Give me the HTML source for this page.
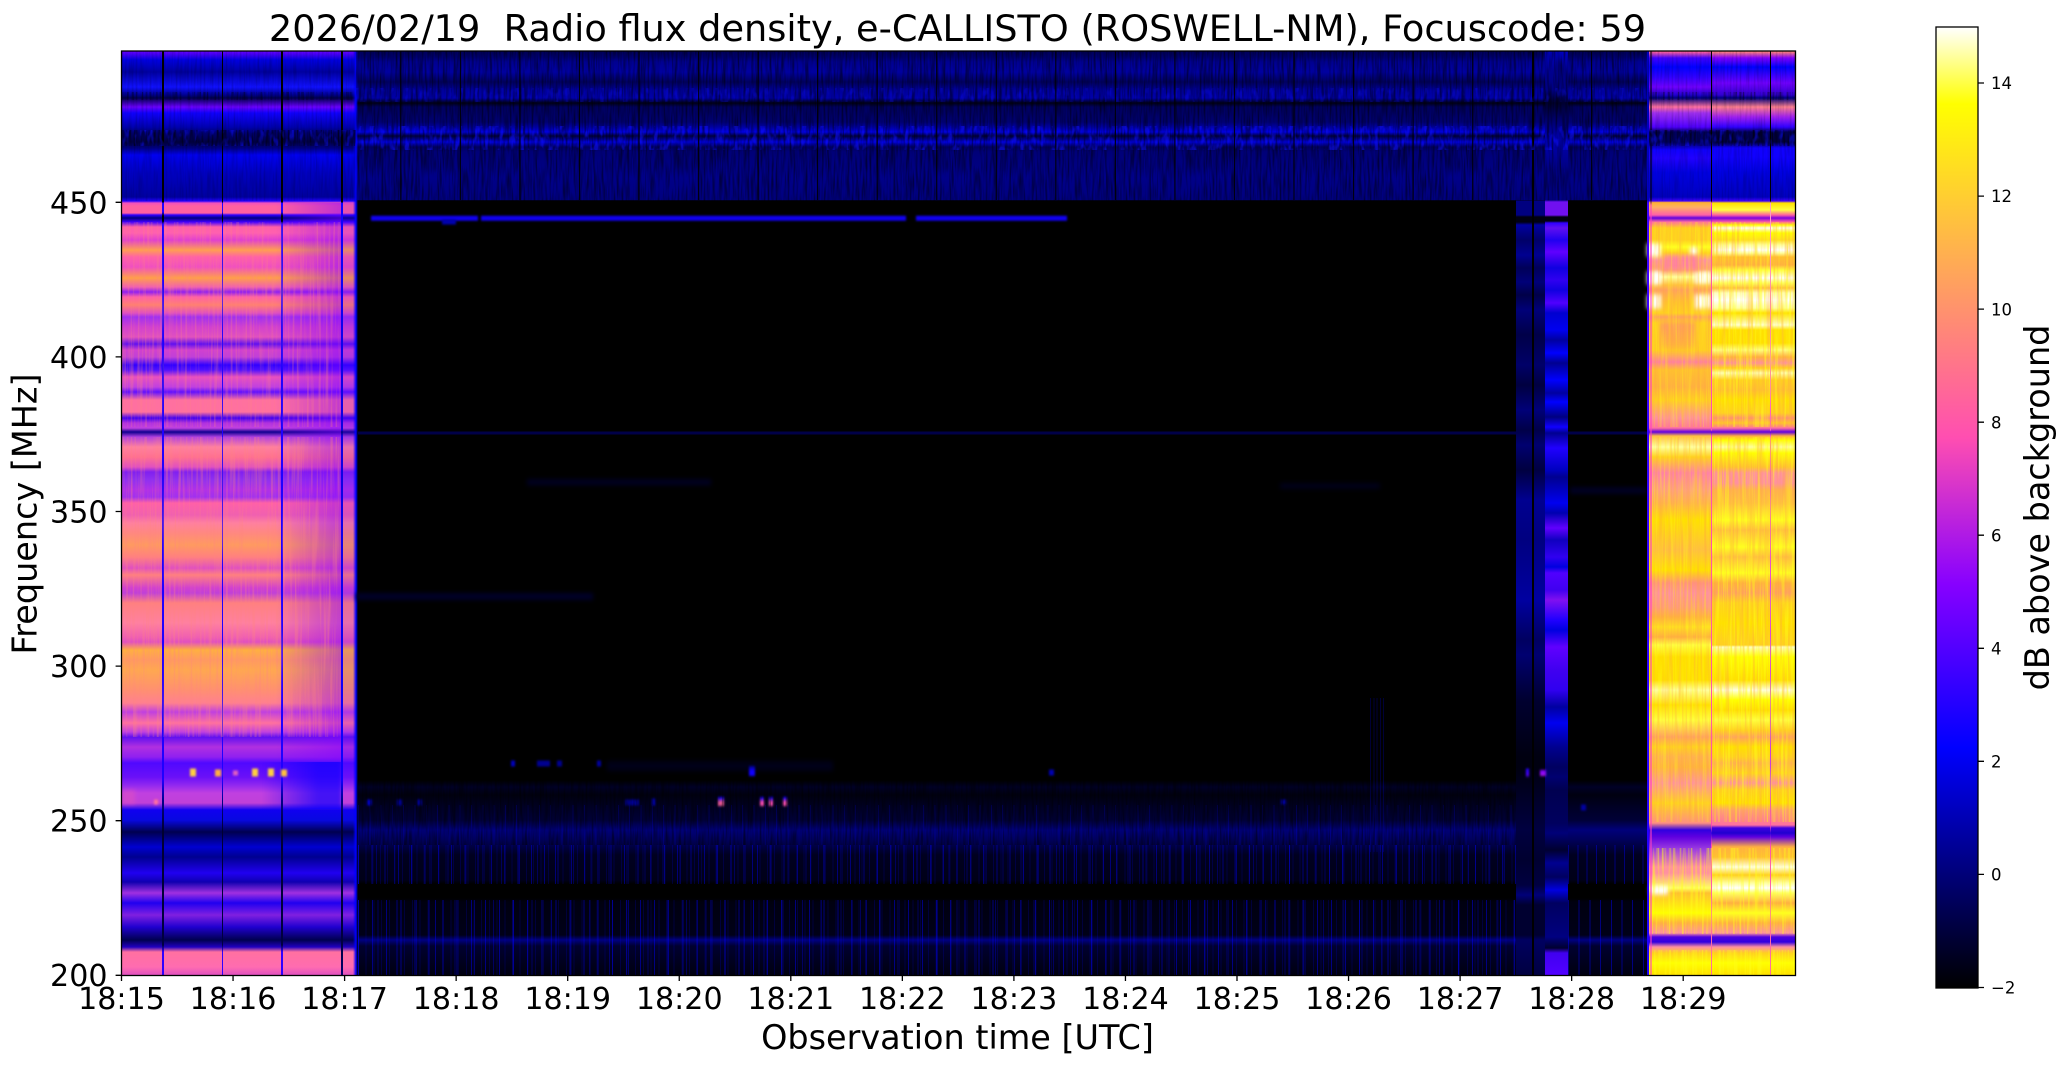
<!DOCTYPE html>
<html lang="en">
<head>
<meta charset="utf-8">
<title>2026/02/19 Radio flux density, e-CALLISTO (ROSWELL-NM)</title>
<style>
html,body{margin:0;padding:0;background:#fff}
body{width:2066px;height:1067px;overflow:hidden;position:relative;font-family:"DejaVu Sans","Liberation Sans",sans-serif}
#clip{position:absolute;left:0;top:0;width:2066px;height:1067px;clip-path:inset(51px 270.5px 92px 121.5px);background:#000}
#clip div{position:absolute;top:0;height:1067px}
#clip .b{filter:blur(1px)}
#clip .c{filter:blur(2px)}
#over{position:absolute;left:0;top:0}
#noise{position:absolute;left:0;top:0;clip-path:inset(51px 270.5px 92px 121.5px)}
#cb{position:absolute;left:1936px;top:27px;width:42px;height:961px;background:linear-gradient(to top,#000 0%,#00f 25%,#8700ff 42%,#ff4eb1 57.25%,#ff0 92%,#fff 100%)}
</style>
</head>
<body>
<div id="clip">
  <!-- middle top band -->
  <div style="left:356px;width:1291px;background:linear-gradient(180deg,#000058 51px,#000070 57px,#000090 62px,#0000a0 72px,#000060 82px,#00009a 90px,#0000a8 98px,#000018 103px,#000060 107px,#000070 122px,#0000a0 127px,#0000e0 132px,#000040 136px,#0000e0 142px,#000060 147px,#000078 152px,#000088 178px,#000080 198px,#000080 200px,transparent 200.5px)"></div>
  <!-- left panel -->
  <div style="left:122px;width:234px;background:linear-gradient(180deg,#6000ff 52px,#0000e0 60px,#0000a0 72px,#1010ff 87px,#000090 95px,#000050 98px,#6a00ff 107px,#1000ff 113px,#0000b0 127px,#000070 133px,#000048 142px,#000080 148px,#0000f0 155px,#0000c0 173px,#0000a0 197px,#2000ff 201px,#f050c0 203px,#ff60a0 206px,#ff60a0 213px,#3000ff 215px,#000080 218px,#4000ff 222px,#ff60a8 227px,#ff60b0 233px,#e040d0 240px,#ffa050 250px,#ff60a8 257px,#f050c0 267px,#ffa048 278px,#f060b0 287px,#9020f0 292px,#ff60a8 297px,#ff8070 305px,#e050c0 313px,#a030f0 317px,#d040d0 327px,#e050c0 337px,#6010f0 344px,#d040d0 350px,#c040d8 357px,#3000ff 365px,#5010ff 370px,#e850c0 377px,#c040e0 387px,#6010ff 392px,#ff70a0 400px,#ff70a0 412px,#4000f0 418px,#b030e0 423px,#c040e0 428px,#100090 432px,#b040e0 437px,#ff80a0 447px,#ff7090 457px,#e050c0 467px,#8020f0 472px,#9030f0 480px,#b030e8 490px,#a030f0 497px,#ff60a8 503px,#f060b0 515px,#ff80a0 523px,#ff8880 533px,#ff9a60 545px,#ff8080 557px,#e050c0 568px,#ff8080 575px,#d040d0 588px,#c040d8 593px,#ff8080 603px,#ff80a0 623px,#f060b0 637px,#e050c0 642px,#ffb040 650px,#ff9a60 660px,#ffa850 670px,#ff9070 690px,#ff8090 703px,#c040e0 712px,#ff70a0 723px,#c040e0 732px,#6010f0 737px,#b030e0 747px,#9020f0 757px,#5008ff 763px,#6a10f8 777px,#9028f0 785px,#c040e0 793px,#c040d8 803px,#1000f0 810px,#0808e0 820px,#000050 832px,#0000d0 847px,#000090 857px,#2000f0 873px,#1000b0 882px,#a030e0 893px,#2000f0 903px,#8020e0 915px,#2000d0 927px,#000050 940px,#2000c0 947px,#ff70a0 952px,#ff6cb0 967px,#e050c0 975px)"></div>
  <!-- left panel fade -->
  <div style="left:275px;width:67px;background:linear-gradient(90deg,rgba(130,0,255,0),rgba(130,0,255,.5));clip-path:inset(203px 0 307px 0)"></div>
  <div style="left:342px;width:14px;background:rgba(80,0,255,.14);clip-path:inset(203px 0 307px 0)"></div>
  <div class="c" style="left:262px;width:80px;background:linear-gradient(90deg,rgba(16,0,255,0),#1000ff 70%);opacity:.7;clip-path:inset(762px 0 258px 0)"></div>
  <div style="left:353px;width:5px;background:linear-gradient(90deg,rgba(0,0,255,0),#0000ff 60%,rgba(0,0,160,0));clip-path:inset(51px 0 92px 0)"></div>
  <!-- left panel vertical lines -->
  <div style="left:162px;width:1.6px;background:linear-gradient(180deg,#000 51px,#000 202px,#2000ff 203px,#2000ff 212px,#000 216px,#000 221px,#2000ff 224px,#2000ff 780px,#000090 800px,#000030 830px,#000040 945px,#3000ff 952px,#3000ff 975px)"></div>
  <div style="left:221.5px;width:1.6px;background:linear-gradient(180deg,#000 51px,#000 202px,#2000ff 203px,#2000ff 212px,#000 216px,#000 221px,#2000ff 224px,#2000ff 780px,#000090 800px,#000030 830px,#000040 945px,#3000ff 952px,#3000ff 975px)"></div>
  <div style="left:281px;width:1.6px;background:linear-gradient(180deg,#000 51px,#000 202px,#2000ff 203px,#2000ff 212px,#000 216px,#000 221px,#2000ff 224px,#2000ff 780px,#000090 800px,#000030 830px,#000040 945px,#3000ff 952px,#3000ff 975px)"></div>
  <div style="left:341px;width:1.6px;background:linear-gradient(180deg,#000 51px,#000 202px,#1000ff 203px,#1000e0 430px,#000080 432px,#1000e0 436px,#1000ff 780px,#000090 800px,#000030 830px,#000040 945px,#000070 975px)"></div>
  <!-- left panel dots -->
  <div class="b" style="left:190px;width:6px;background:linear-gradient(180deg,transparent 768px,#ffd040 769px,#ffd040 776px,transparent 777px)"></div>
  <div class="b" style="left:215px;width:6px;background:linear-gradient(180deg,transparent 769px,#ffb040 770px,#ffb040 776px,transparent 777px)"></div>
  <div class="b" style="left:233px;width:5px;background:linear-gradient(180deg,transparent 770px,#e060c0 771px,#e060c0 775px,transparent 776px)"></div>
  <div class="b" style="left:252px;width:6px;background:linear-gradient(180deg,transparent 768px,#ffd040 769px,#ffd040 776px,transparent 777px)"></div>
  <div class="b" style="left:268px;width:6px;background:linear-gradient(180deg,transparent 768px,#ffd040 769px,#ffd040 776px,transparent 777px)"></div>
  <div class="b" style="left:281px;width:6px;background:linear-gradient(180deg,transparent 769px,#ffc040 770px,#ffc040 776px,transparent 777px)"></div>
  <div class="b" style="left:154px;width:4px;background:linear-gradient(180deg,transparent 799px,#ff70a0 800px,#ff70a0 804px,transparent 805px)"></div>
  <div class="c" style="left:122px;width:13px;opacity:.55;background:linear-gradient(180deg,transparent 789px,#e050c0 791px,#e050c0 803px,transparent 805px)"></div>

  <!-- blue tracer at 445 MHz -->
  <div class="b" style="left:371px;width:107px;background:linear-gradient(180deg,transparent 215.5px,#1000f0 216px,#1000f0 220.5px,transparent 221px)"></div>
  <div class="b" style="left:481px;width:425px;background:linear-gradient(180deg,transparent 215.5px,#1000f0 216px,#1000f0 220.5px,transparent 221px)"></div>
  <div class="b" style="left:916px;width:151px;background:linear-gradient(180deg,transparent 215.5px,#1000f0 216px,#1000f0 220.5px,transparent 221px)"></div>
  <div class="b" style="left:442px;width:14px;background:linear-gradient(180deg,transparent 219px,#0000b0 220px,#0000b0 224px,transparent 225px)"></div>

  <!-- faint structures in the black -->
  <div style="left:358px;width:1289px;background:linear-gradient(180deg,transparent 431px,#000048 432px,#000048 434px,transparent 435px)"></div>
  <div class="c" style="left:527px;width:184px;background:linear-gradient(180deg,transparent 478px,#000020 480px,#000020 484px,transparent 487px)"></div>
  <div class="c" style="left:1280px;width:100px;background:linear-gradient(180deg,transparent 482px,#000018 484px,#000018 488px,transparent 490px)"></div>
  <div class="c" style="left:1570px;width:77px;background:linear-gradient(180deg,transparent 486px,#000022 488px,#000022 493px,transparent 495px)"></div>
  <div class="c" style="left:356px;width:237px;background:linear-gradient(180deg,transparent 592px,#000028 594px,#000028 599px,transparent 601px)"></div>
  <div class="c" style="left:607px;width:226px;background:linear-gradient(180deg,transparent 760px,#000018 762px,#000018 770px,transparent 772px)"></div>
  <!-- lower horizontal bands -->
  <div style="left:358px;width:1289px;background:linear-gradient(180deg,transparent 780px,#000026 787px,#000010 795px,#000026 808px,#000036 820px,#00007a 830px,#00005a 840px,#000020 855px,#000018 880px,#000 884px,#000 898px,#000010 902px,#000018 935px,#000080 940px,#000030 946px,#000010 975px)"></div>
  <!-- vertical thin streaks -->
  <div style="left:358px;width:1158px;clip-path:inset(845px 0 183px 0);background:repeating-linear-gradient(90deg,rgba(0,0,255,.4) 0 1px,transparent 1px 13.3px),repeating-linear-gradient(90deg,rgba(0,0,255,.28) 0 1px,transparent 1px 17.9px),repeating-linear-gradient(90deg,rgba(0,0,220,.2) 0 1px,transparent 1px 7.3px)"></div>
  <div style="left:358px;width:1158px;clip-path:inset(900px 0 92px 0);background:repeating-linear-gradient(90deg,rgba(0,0,255,.45) 0 1px,transparent 1px 14.1px),repeating-linear-gradient(90deg,rgba(0,0,255,.3) 0 1px,transparent 1px 19.3px),repeating-linear-gradient(90deg,rgba(0,0,220,.2) 0 1px,transparent 1px 7.7px)"></div>
  <div style="left:1568px;width:79px;clip-path:inset(845px 0 183px 0);background:repeating-linear-gradient(90deg,rgba(0,0,255,.4) 0 1px,transparent 1px 9.3px)"></div>
  <div style="left:1568px;width:79px;clip-path:inset(900px 0 92px 0);background:repeating-linear-gradient(90deg,rgba(0,0,255,.45) 0 1px,transparent 1px 10.7px)"></div>
  <div style="left:358px;width:1158px;clip-path:inset(805px 0 222px 0);opacity:.45;background:repeating-linear-gradient(90deg,rgba(0,0,255,.4) 0 1px,transparent 1px 11.3px)"></div>
  <div style="left:1370px;width:16px;clip-path:inset(698px 0 215px 0);opacity:.55;background:repeating-linear-gradient(90deg,rgba(0,0,200,.5) 0 1px,transparent 1px 3.3px)"></div>

  <!-- column A -->
  <div style="left:1516px;width:29px;background:linear-gradient(180deg,transparent 200px,#000080 201px,#000080 215px,#000010 217px,#000010 222px,#0000a0 225px,#000068 240px,#000090 255px,#000058 268px,#000078 282px,#000048 295px,#000078 310px,#000048 335px,#000068 365px,#000040 385px,#000078 410px,#000048 430px,#000070 445px,#000040 470px,#000090 500px,#000080 540px,#0000a0 600px,#000060 640px,#000070 655px,#000030 700px,#000020 730px,#000010 757px,#000010 768px,#000040 830px,#000030 860px,#000040 885px,#000078 895px,#000030 905px,#000030 935px,#000060 940px,#000040 975px)"></div>
  <div style="left:1532px;width:1.5px;background:#000"></div>
  <!-- column B -->
  <div style="left:1545px;width:23px;background:linear-gradient(180deg,#0000c0 52px,#000090 70px,#000080 90px,#000030 103px,#000090 130px,#0000b0 140px,#000080 170px,#000088 200px,#7010f0 202px,#7010f0 215px,#000010 217px,#000010 221px,#3000ff 223px,#6010f0 228px,#2000f0 240px,#6000ff 252px,#1000e0 268px,#3000f0 280px,#1000e0 290px,#5000ff 303px,#0000d0 313px,#0000f0 330px,#0000a0 340px,#0000ff 353px,#000090 363px,#0000ff 380px,#0000a0 393px,#0000ff 402px,#000080 417px,#1000ff 427px,#000090 433px,#2000ff 448px,#0000c0 470px,#000090 477px,#0000f0 503px,#0000b0 513px,#6000ff 528px,#1000c0 540px,#3000f0 557px,#0000e0 567px,#5000ff 573px,#4000f0 590px,#8010f0 600px,#2000ff 620px,#0000e0 630px,#6000ff 647px,#4000f0 670px,#3000f0 690px,#0000a0 707px,#0000f0 723px,#000090 747px,#000060 767px,#000070 777px,#000050 790px,#00005e 823px,#000078 833px,#000030 850px,#000090 863px,#000060 877px,#0000e0 890px,#000060 903px,#000080 937px,#000030 948px,#4000f0 953px,#5000ff 973px)"></div>
  <!-- dots in the black -->
  <div class="b" style="left:718px;width:6px;background:linear-gradient(180deg,transparent 796px,#1000ff 798px,#ff60a0 802px,#ff60a0 805px,transparent 807px)"></div>
  <div class="b" style="left:760px;width:4px;background:linear-gradient(180deg,transparent 796px,#1000ff 798px,#ff50b0 802px,#ff50b0 805px,transparent 807px)"></div>
  <div class="b" style="left:769px;width:4px;background:linear-gradient(180deg,transparent 796px,#1000ff 798px,#ff50b0 802px,#ff50b0 805px,transparent 807px)"></div>
  <div class="b" style="left:783px;width:4px;background:linear-gradient(180deg,transparent 796px,#1000ff 798px,#ff50b0 802px,#ff50b0 805px,transparent 807px)"></div>
  <div class="b" style="left:749px;width:6px;background:linear-gradient(180deg,transparent 765px,#0000a0 767px,#1000ff 771px,#1000ff 775px,transparent 777px)"></div>
  <div class="b" style="left:367px;width:5px;background:linear-gradient(180deg,transparent 799px,#0000c0 800px,#0000c0 805px,transparent 806px)"></div>
  <div class="b" style="left:397px;width:5px;background:linear-gradient(180deg,transparent 799px,#000090 800px,#000090 805px,transparent 806px)"></div>
  <div class="b" style="left:417px;width:5px;background:linear-gradient(180deg,transparent 799px,#000090 800px,#000090 805px,transparent 806px)"></div>
  <div class="b" style="left:625px;width:14px;background:linear-gradient(180deg,transparent 799px,#000090 800px,#000090 805px,transparent 806px)"></div>
  <div class="b" style="left:652px;width:3px;background:linear-gradient(180deg,transparent 798px,#0000c0 799px,#0000c0 805px,transparent 806px)"></div>
  <div class="b" style="left:511px;width:4px;background:linear-gradient(180deg,transparent 760px,#0000c0 761px,#0000c0 766px,transparent 767px)"></div>
  <div class="b" style="left:537px;width:13px;background:linear-gradient(180deg,transparent 760px,#000090 761px,#000090 766px,transparent 767px)"></div>
  <div class="b" style="left:557px;width:5px;background:linear-gradient(180deg,transparent 760px,#000090 761px,#000090 766px,transparent 767px)"></div>
  <div class="b" style="left:597px;width:4px;background:linear-gradient(180deg,transparent 760px,#0000a0 761px,#0000a0 766px,transparent 767px)"></div>
  <div class="b" style="left:1049px;width:5px;background:linear-gradient(180deg,transparent 769px,#0000b0 770px,#0000b0 775px,transparent 776px)"></div>
  <div class="b" style="left:1281px;width:5px;background:linear-gradient(180deg,transparent 799px,#0000a0 800px,#0000a0 804px,transparent 805px)"></div>
  <div class="b" style="left:1526px;width:3px;background:linear-gradient(180deg,transparent 768px,#2000ff 769px,#5000ff 775px,transparent 778px)"></div>
  <div class="b" style="left:1540px;width:6px;background:linear-gradient(180deg,transparent 769px,#8000ff 771px,#a010f0 775px,transparent 777px)"></div>
  <div class="b" style="left:1581px;width:5px;background:linear-gradient(180deg,transparent 804px,#0000a0 805px,#0000a0 810px,transparent 811px)"></div>

  <!-- right panel, dimmer zone -->
  <div style="left:1648px;width:63px;background:linear-gradient(180deg,#ff60a0 52px,#4000ff 58px,#0000ff 67px,#3000ff 77px,#7000ff 87px,#2000d0 95px,#000080 98px,#ff70a0 107px,#a030f0 113px,#5000ff 127px,#000060 132px,#000060 142px,#1000ff 150px,#2000ff 158px,#0000e0 173px,#0000c0 197px,#4000ff 201px,#ffb030 202.5px,#ffb060 207px,#ff60a8 215px,#6000e0 218px,#ff70a0 222px,#ffd020 228px,#ffd020 240px,#ffff20 247px,#ffd020 253px,#ff90a0 260px,#ffa070 270px,#ffffa0 277px,#ffc040 285px,#ffa060 290px,#ffc030 302px,#ffd020 313px,#ffa060 317px,#ffd020 323px,#ffd020 350px,#ff80a0 362px,#ffc030 370px,#ffb040 387px,#ffd020 400px,#ff90a0 418px,#ff70a0 428px,#6000e0 432px,#ffc040 436px,#ffffa0 447px,#ffd020 457px,#ff80a8 473px,#ffa080 490px,#ffb050 503px,#ffe000 520px,#ffc040 550px,#ffe000 570px,#ff9080 583px,#ff90a0 593px,#ff9a80 607px,#ffb040 617px,#ffe020 627px,#ffb040 637px,#ffff40 645px,#ffe000 657px,#ffe000 680px,#ffffa0 690px,#ffe000 705px,#ffff40 720px,#ffa060 737px,#ffd020 747px,#ffb050 757px,#ffb040 767px,#ff90a0 783px,#ffd020 803px,#ff9080 823px,#3000e0 830px,#6000e0 837px,#a040e0 850px,#ff90a0 867px,#ff90a0 873px,#ffff60 888px,#ffc030 893px,#ffff00 913px,#ffb040 923px,#ff90a0 933px,#5000e0 937px,#3000e0 942px,#ff90a0 947px,#ffd020 953px,#ffff00 963px,#ffe000 975px)"></div>
  <!-- right panel, bright zone -->
  <div style="left:1711px;width:85px;background:linear-gradient(180deg,#ff8080 52px,#8000ff 58px,#0000ff 67px,#7000ff 83px,#3000d0 95px,#000080 98px,#ff8090 107px,#a020f0 117px,#3000ff 127px,#000050 132px,#000040 142px,#1000ff 148px,#1000ff 157px,#0000e0 173px,#0000c0 197px,#4000ff 201px,#ffe000 203px,#ffff40 210px,#ff60a0 215px,#8000e0 218px,#ff60a0 222px,#ffff00 225px,#fffff0 228px,#ffff00 233px,#ffe020 240px,#ffffa0 245px,#fff 250px,#ffffa0 253px,#ffc030 257px,#ffb040 265px,#ffff40 270px,#fff 278px,#ffff60 283px,#ffc040 288px,#ffffc0 293px,#fff 300px,#ffffa0 308px,#ffe000 313px,#ffffd0 325px,#ffe000 330px,#ffe000 343px,#ffff80 350px,#ffb040 357px,#ff90a0 363px,#ffd020 368px,#ffffb0 373px,#ffd020 380px,#ffc030 390px,#ffe000 400px,#ffd020 413px,#ff9070 418px,#ffc030 423px,#ff70a0 428px,#6000e0 432px,#ffb040 436px,#ffff00 440px,#ffffa0 447px,#ffff00 453px,#ffc030 467px,#ff90a0 473px,#ff90a0 483px,#ffb050 490px,#ffc040 503px,#ffff20 520px,#ffc040 530px,#ffff20 547px,#ffc040 557px,#ffff20 573px,#ffb040 583px,#ffa060 593px,#ffd020 603px,#ffe000 623px,#ffd020 645px,#ffffc0 647px,#ffff00 657px,#ffe000 680px,#ffffe0 690px,#ffff00 700px,#ffe000 710px,#ffff40 720px,#ffd020 730px,#ffa060 737px,#ffe000 747px,#ffd020 757px,#ffb050 763px,#ffd020 773px,#ff90a0 783px,#ffd020 790px,#ffe000 803px,#ffa070 810px,#ff70a0 825px,#4000e0 828px,#2000d0 833px,#6000e0 837px,#ffb040 847px,#ffc030 857px,#ffffe0 867px,#ffd020 875px,#ffffa0 883px,#fff 888px,#ffff60 893px,#ffb040 903px,#ffff20 913px,#ffb040 923px,#ff90a0 933px,#5000e0 937px,#3000e0 942px,#ff90a0 947px,#ffd020 953px,#ffff00 963px,#ffe000 975px)"></div>
  <!-- white patches in dim zone -->
  <div class="c" style="left:1647px;width:14px;background:linear-gradient(180deg,transparent 242px,#fff 245px,#fff 255px,transparent 258px,transparent 270px,#fff 273px,#fff 283px,transparent 286px,transparent 293px,#fff 296px,#fff 307px,transparent 310px)"></div>
  <div class="c" style="left:1695px;width:16px;background:linear-gradient(180deg,transparent 271px,#fffff0 273px,#fffff0 282px,transparent 285px,transparent 293px,#fff 296px,#fff 307px,transparent 310px)"></div>
  <div class="c" style="left:1690px;width:8px;background:linear-gradient(180deg,transparent 246px,#fff 248px,#fff 254px,transparent 256px)"></div>
  <div class="c" style="left:1650px;width:18px;background:linear-gradient(180deg,transparent 885px,#fff 887px,#fff 893px,transparent 896px)"></div>
  <div class="c" style="left:1660px;width:35px;background:linear-gradient(180deg,transparent 320px,#ff9a60 324px,#ffb040 345px,transparent 352px)"></div>
  <div class="c" style="left:1663px;width:36px;background:linear-gradient(180deg,transparent 254px,#ff80a0 258px,#ff80a0 268px,transparent 271px)"></div>
  <!-- right-panel lines -->
  <div style="left:1710.5px;width:1.5px;background:linear-gradient(180deg,#000 51px,#000 201px,#ff40c0 203px,#8000e0 218px,#ff40c0 224px,#ff50b0 430px,#5000e0 432px,#ff50b0 436px,#ff50b0 825px,#3000e0 833px,#ff50b0 845px,#ff70a0 975px)"></div>
  <div style="left:1769.5px;width:1.5px;background:linear-gradient(180deg,#000 51px,#000 201px,#ffa0c0 203px,#ff60c0 430px,#5000e0 432px,#ff60c0 436px,#c030f0 775px,#ff50b0 825px,#3000e0 833px,#ff50b0 845px,#ff70a0 975px)"></div>
  <div style="left:1647px;width:2px;background:linear-gradient(180deg,#0000c0 51px,#0000c0 200px,#4000ff 203px,#2000ff 975px)"></div>
  <div style="left:1650px;width:2px;opacity:.55;background:linear-gradient(180deg,#000 51px,#000 200px,#ff40c0 205px,#ff40c0 975px)"></div>
</div>

<svg id="noise" width="2066" height="1067" xmlns="http://www.w3.org/2000/svg">
  <defs>
    <filter id="nk" x="0" y="0" width="100%" height="100%" color-interpolation-filters="sRGB">
      <feTurbulence type="fractalNoise" baseFrequency="0.5 0.035" numOctaves="2" seed="4"/>
      <feColorMatrix values="0 0 0 0 0  0 0 0 0 0  0 0 0 0 0  2.6 0 0 0 -1.05"/>
    </filter>
    <filter id="nb" x="0" y="0" width="100%" height="100%" color-interpolation-filters="sRGB">
      <feTurbulence type="fractalNoise" baseFrequency="0.2 0.09" numOctaves="2" seed="9"/>
      <feColorMatrix values="0 0 0 0 .06  0 0 0 0 .06  0 0 0 0 1  4 0 0 0 -2"/>
    </filter>
    <filter id="np" x="0" y="0" width="100%" height="100%" color-interpolation-filters="sRGB">
      <feTurbulence type="fractalNoise" baseFrequency="0.42 0.012" numOctaves="2" seed="12"/>
      <feColorMatrix values="0 0 0 0 1  0 0 0 0 .52  0 0 0 0 .5  3.5 0 0 0 -1.6"/>
    </filter>
    <filter id="ny" x="0" y="0" width="100%" height="100%" color-interpolation-filters="sRGB">
      <feTurbulence type="fractalNoise" baseFrequency="0.45 0.015" numOctaves="2" seed="21"/>
      <feColorMatrix values="0 0 0 0 1  0 0 0 0 1  0 0 0 0 .1  4 0 0 0 -1.8"/>
    </filter>
    <filter id="no" x="0" y="0" width="100%" height="100%" color-interpolation-filters="sRGB">
      <feTurbulence type="fractalNoise" baseFrequency="0.4 0.014" numOctaves="2" seed="31"/>
      <feColorMatrix values="0 0 0 0 1  0 0 0 0 .65  0 0 0 0 .25  4 0 0 0 -1.8"/>
    </filter>
  </defs>
  <!-- top band streaks -->
  <rect x="122" y="51" width="234" height="150" filter="url(#nk)" opacity=".15"/>
  <rect x="1648" y="51" width="148" height="150" filter="url(#nk)" opacity=".15"/>
  <rect x="356" y="51" width="1291" height="149.5" filter="url(#nk)" opacity=".5"/>
  <rect x="356" y="126" width="1291" height="24" filter="url(#nb)" opacity=".55"/>
  <rect x="356" y="88" width="1291" height="14" filter="url(#nb)" opacity=".3"/>
  <rect x="122" y="92" width="234" height="8" filter="url(#nk)" opacity=".4"/>
  <rect x="122" y="130" width="234" height="16" filter="url(#nk)" opacity=".6"/>
  <rect x="122" y="130" width="234" height="16" filter="url(#nb)" opacity=".45"/>
  <rect x="1648" y="92" width="148" height="8" filter="url(#nk)" opacity=".4"/>
  <rect x="1648" y="130" width="148" height="16" filter="url(#nk)" opacity=".6"/>
  <rect x="1648" y="130" width="148" height="16" filter="url(#nb)" opacity=".45"/>
  <!-- break up lower faint bands -->
  <rect x="358" y="780" width="1158" height="65" filter="url(#nk)" opacity=".45"/>
  <!-- panel streaks -->
  <rect x="122" y="222" width="218" height="205" filter="url(#np)" opacity=".3"/>
  <rect x="122" y="437" width="218" height="300" filter="url(#np)" opacity=".35"/>
  <rect x="1652" y="222" width="58" height="205" filter="url(#ny)" opacity=".3"/>
  <rect x="1652" y="437" width="58" height="385" filter="url(#ny)" opacity=".3"/>
  <rect x="1712" y="222" width="84" height="205" filter="url(#ny)" opacity=".5"/>
  <rect x="1712" y="437" width="84" height="385" filter="url(#ny)" opacity=".5"/>
  <rect x="1652" y="848" width="144" height="86" filter="url(#ny)" opacity=".5"/>
  <rect x="1652" y="950" width="144" height="25" filter="url(#ny)" opacity=".5"/>
  <rect x="1652" y="222" width="144" height="205" filter="url(#no)" opacity=".35"/>
  <rect x="1652" y="437" width="144" height="385" filter="url(#no)" opacity=".35"/>
  <!-- faint dark periodic lines in the top band -->
  <g fill="#000" opacity=".85">
    <rect x="400.2" y="51" width="1.2" height="149"/><rect x="459.8" y="51" width="1.2" height="149"/>
    <rect x="519.3" y="51" width="1.2" height="149"/><rect x="578.9" y="51" width="1.2" height="149"/>
    <rect x="638.4" y="51" width="1.2" height="149"/><rect x="698" y="51" width="1.2" height="149"/>
    <rect x="757.5" y="51" width="1.2" height="149"/><rect x="817" y="51" width="1.2" height="149"/>
    <rect x="876.6" y="51" width="1.2" height="149"/><rect x="936.1" y="51" width="1.2" height="149"/>
    <rect x="995.7" y="51" width="1.2" height="149"/><rect x="1055.2" y="51" width="1.2" height="149"/>
    <rect x="1114.8" y="51" width="1.2" height="149"/><rect x="1174.3" y="51" width="1.2" height="149"/>
    <rect x="1233.9" y="51" width="1.2" height="149"/><rect x="1293.4" y="51" width="1.2" height="149"/>
    <rect x="1353" y="51" width="1.2" height="149"/><rect x="1412.5" y="51" width="1.2" height="149"/>
    <rect x="1472.1" y="51" width="1.2" height="149"/><rect x="1591" y="51" width="1.2" height="149"/>
  </g>
</svg>

<div id="cb"></div>

<svg id="over" width="2066" height="1067" xmlns="http://www.w3.org/2000/svg" font-family="'DejaVu Sans','Liberation Sans',sans-serif" fill="#000">
  <!-- axes frame -->
  <rect x="121.5" y="51" width="1674" height="924.5" fill="none" stroke="#000" stroke-width="1.3"/>
  <rect x="1936" y="27" width="42" height="961" fill="none" stroke="#000" stroke-width="1.3"/>
  <!-- ticks -->
  <g stroke="#000" stroke-width="1.3">
    <path d="M121.5 975.5V981M233.05 975.5V981M344.6 975.5V981M456.15 975.5V981M567.7 975.5V981M679.25 975.5V981M790.8 975.5V981M902.35 975.5V981M1013.9 975.5V981M1125.45 975.5V981M1237 975.5V981M1348.55 975.5V981M1460.1 975.5V981M1571.65 975.5V981M1683.2 975.5V981"/>
    <path d="M115.6 975.3H121.5M115.6 820.7H121.5M115.6 666.1H121.5M115.6 511.5H121.5M115.6 356.9H121.5M115.6 202.3H121.5"/>
    <path d="M1978 987.5H1984M1978 874.4H1984M1978 761.3H1984M1978 648.3H1984M1978 535.2H1984M1978 422.2H1984M1978 309.1H1984M1978 196.1H1984M1978 83H1984"/>
  </g>
  <!-- title -->
  <text x="957.5" y="41" font-size="36.7" text-anchor="middle" xml:space="preserve" style="white-space:pre">2026/02/19  Radio flux density, e-CALLISTO (ROSWELL-NM), Focuscode: 59</text>
  <!-- y tick labels -->
  <g font-size="30.1" text-anchor="end">
    <text x="107.5" y="986">200</text>
    <text x="107.5" y="831.5">250</text>
    <text x="107.5" y="677">300</text>
    <text x="107.5" y="522.5">350</text>
    <text x="107.5" y="368">400</text>
    <text x="107.5" y="213.5">450</text>
  </g>
  <!-- x tick labels -->
  <g font-size="30.1" text-anchor="middle">
    <text x="121.5" y="1009">18:15</text>
    <text x="233.05" y="1009">18:16</text>
    <text x="344.6" y="1009">18:17</text>
    <text x="456.15" y="1009">18:18</text>
    <text x="567.7" y="1009">18:19</text>
    <text x="679.25" y="1009">18:20</text>
    <text x="790.8" y="1009">18:21</text>
    <text x="902.35" y="1009">18:22</text>
    <text x="1013.9" y="1009">18:23</text>
    <text x="1125.45" y="1009">18:24</text>
    <text x="1237" y="1009">18:25</text>
    <text x="1348.55" y="1009">18:26</text>
    <text x="1460.1" y="1009">18:27</text>
    <text x="1571.65" y="1009">18:28</text>
    <text x="1683.2" y="1009">18:29</text>
  </g>
  <!-- axis labels -->
  <text x="957.5" y="1049" font-size="33.45" text-anchor="middle">Observation time [UTC]</text>
  <text transform="translate(36.5 514) rotate(-90)" font-size="33.45" text-anchor="middle">Frequency [MHz]</text>
  <text transform="translate(2049 507.5) rotate(-90)" font-size="33.45" text-anchor="middle">dB above background</text>
  <!-- colorbar tick labels -->
  <g font-size="16.5">
    <text x="1991" y="993.5">−2</text>
    <text x="1991" y="880.5">0</text>
    <text x="1991" y="767.5">2</text>
    <text x="1991" y="654.5">4</text>
    <text x="1991" y="541.5">6</text>
    <text x="1991" y="428.5">8</text>
    <text x="1991" y="315.5">10</text>
    <text x="1991" y="202">12</text>
    <text x="1991" y="89">14</text>
  </g>
</svg>
</body>
</html>
